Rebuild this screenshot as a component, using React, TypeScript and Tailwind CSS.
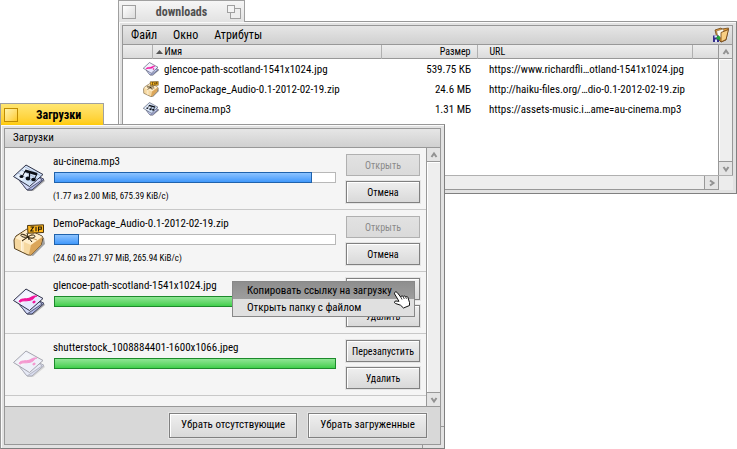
import React from 'react';

type FileKind = 'audio' | 'zip' | 'image';

interface Download {
  name: string;
  kind: FileKind;
  percent: number;
  info?: string;
  done?: boolean;
  missing?: boolean;
  primary: string;
  primaryDisabled?: boolean;
  secondary: string;
}

const files: { name: string; kind: FileKind; size: string; url: string }[] = [
  { name: 'glencoe-path-scotland-1541x1024.jpg', kind: 'image', size: '539.75 КБ', url: 'https://www.richardfli…otland-1541x1024.jpg' },
  { name: 'DemoPackage_Audio-0.1-2012-02-19.zip', kind: 'zip', size: '24.6 МБ', url: 'http://haiku-files.org/…dio-0.1-2012-02-19.zip' },
  { name: 'au-cinema.mp3', kind: 'audio', size: '1.31 МБ', url: 'https://assets-music.i…ame=au-cinema.mp3' },
];

const downloads: Download[] = [
  { name: 'au-cinema.mp3', kind: 'audio', percent: 92, info: '(1.77 из 2.00 MiB, 675.39 KiB/с)', primary: 'Открыть', primaryDisabled: true, secondary: 'Отмена' },
  { name: 'DemoPackage_Audio-0.1-2012-02-19.zip', kind: 'zip', percent: 9, info: '(24.60 из 271.97 MiB, 265.94 KiB/с)', primary: 'Открыть', primaryDisabled: true, secondary: 'Отмена' },
  { name: 'glencoe-path-scotland-1541x1024.jpg', kind: 'image', percent: 100, done: true, primary: 'Открыть', secondary: 'Удалить' },
  { name: 'shutterstock_1008884401-1600x1066.jpeg', kind: 'image', percent: 100, done: true, missing: true, primary: 'Перезапустить', secondary: 'Удалить' },
];

const FileIcon = ({ kind, className }: { kind: FileKind; className: string }) => {
  if (kind === 'zip') {
    return (
      <svg viewBox="0 0 32 32" className={className} aria-hidden="true">
        <path d="M16 31 L20 32 L32 20 L31 14 L28 14 Z" fill="#000" opacity=".35" />
        <path d="M1 16 L3 12 L14 5 L29 12 L30 14 L28 21 L18 31 L15 31 L1.500 24.500 Z" fill="#f6d8a0" stroke="#55401f" />
        <path d="M2 14 L14 5.500 L29 12.500 L18 21 Z" fill="#ffeecb" />
        <path d="M18 21 L29.500 13 L28 21 L18 31 L16 30 Z" fill="#dba65a" />
        <path d="M8.500 17 V27 M10 18 V28" stroke="#fff3d8" strokeWidth="1.200" />
        <path d="M9 16.500 L21 9 M8 10 L24 16" fill="none" stroke="#c59c5d" strokeWidth="1" />
        <path d="M15 13 C9 8 6 11 9 12.500 S13 13 15 13 C20 9 24 12 21 13.500 S17 14 15 13 M15 13 L9 17 M15 13 L19 18 M14 9 L16 16" fill="none" stroke="#2d2413" />
        <path d="M14.500 1.500 L30.500 .8 L30.500 8.500 L15 9.200 Z" fill="#ffb81f" stroke="#4a3512" />
        <path d="M17.500 3 H20.500 L17.700 7 H20.700 M23 2.800 V7.200 M25.500 7.500 V3 H28.300 V5.300 H26" fill="none" stroke="#201808" strokeWidth="1.100" />
      </svg>
    );
  }
  return (
    <svg viewBox="0 0 32 32" className={className} aria-hidden="true">
      <path d="M14 29 L20 29 L32 19 L30 16 Z" fill="#000" opacity=".3" />
      <path d="M7 19 L17 9 L31 17.500 L19 28 L14 28 Z" fill="#aeb7e6" stroke="#3b3e58" />
      <path d="M6 18 L17 8 L29 18 L14 28 Z" fill="#d2d9f8" stroke="#3b3e58" strokeWidth=".8" />
      <path d="M.5 14.500 L13 3 L30 12.500 L16.500 24.500 Z" fill={kind === 'audio' ? '#d3e3f8' : '#e6e9ff'} stroke="#2f3146" />
      <path d="M3 14.500 L13 5 L20 8.500 L9 18.500 Z" fill="#fff" opacity=".55" />
      {kind === 'audio' ? (
        <>
          <path d="M5 11 L21 20.500 M8.500 8 L24.500 17 M12 5 L28 14" stroke="#90a5c9" strokeWidth=".7" />
          <path d="M9.500 14 L12.500 8.500 M24 12 L21.500 17" fill="none" stroke="#0b0e16" />
          <path d="M12.500 7.500 L24.500 11 L23.500 13.500 L11.500 10 Z" fill="#0b0e16" />
          <ellipse cx="15" cy="16.500" rx="2.300" ry="2" fill="#0b0e16" />
          <ellipse cx="8.500" cy="14.500" rx="2" ry="1.500" fill="#0b0e16" />
          <ellipse cx="20.500" cy="17.500" rx="2.300" ry="1.800" fill="#0b0e16" />
          <path d="M16.500 15.500 V11" stroke="#0b0e16" strokeWidth="1.200" />
        </>
      ) : (
        <path d="M6 15.500 C7 12.500 11 13 15 12.500 C18 12 19 9.500 24 10 C21 10.500 22 13 17 14.300 C12 15.500 9 14 7.500 16 Z M20 15.500 L22 15 L22 16.500 L20 17 Z" fill="#f3129a" stroke="#f3129a" strokeWidth="1" />
      )}
    </svg>
  );
};

const FolderIcon = () => (
  <svg viewBox="0 0 18 16" className="h-4 w-[18px]" aria-hidden="true">
    <path d="M3 3 L9 1 L10 2 L16.500 1 L14 13 L9 15 L5 11 Z" fill="#e39b38" stroke="#6b4518" strokeWidth=".8" />
    <path d="M4.500 4 L11 2 L12 4 L9 11 L6 10 Z" fill="#fffdf2" stroke="#7b6240" strokeWidth=".6" />
    <path d="M9 5.500 L16.500 2.500 L14 12.500 L9 15 Z" fill="#f9cf83" stroke="#6a3c10" strokeWidth=".8" />
    <path d="M1 8.500 H7 V15 H1 Z" fill="#34308c" />
    <path d="M2.500 8.500 H5 V10.500 H2.500 Z M3 12.500 H5 V15 H3 Z" fill="#dfe3ff" />
    <path d="M4 11 L6 8.500 L8 9.500 V13 L5.500 12.500 Z" fill="#24a63a" />
  </svg>
);

const HandCursor = () => (
  <svg viewBox="0 0 18 18" className="h-[18px] w-[18px]" aria-hidden="true">
    <path
      d="M1.500 2.800 C1 1 3 .3 4.200 1.500 L7.700 6 C8 4.800 9.600 4.600 10.200 5.700 C10.600 4.700 12.200 4.700 12.700 5.900 C13.500 5.200 14.700 5.500 15 6.600 L16.500 11.500 L16.500 14.500 L10.500 17 L7.500 14.200 L2.500 12.500 C.8 11.800 1.300 9.900 3 10 L6 10.300 Z"
      fill="#fff"
      stroke="#111"
    />
    <path d="M7.700 6 L9 8.500 M10.200 5.700 L11.300 8 M12.700 5.900 L13.500 7.800" stroke="#111" strokeWidth=".8" />
  </svg>
);

const arrows = {
  up: 'M1.500 6 L4 2.500 L6.500 6',
  down: 'M1.500 2 L4 5.500 L6.500 2',
  right: 'M2 1.500 L5.500 4 L2 6.500',
};

const ScrollArrow = ({ dir, label, className }: { dir: keyof typeof arrows; label: string; className: string }) => (
  <button aria-label={label} className={`flex h-[13px] w-[13px] shrink-0 items-center justify-center bg-[#e4e4e4] ${className}`}>
    <svg viewBox="0 0 8 8" className="h-2 w-2">
      <path d={arrows[dir]} fill="none" stroke="#929292" strokeWidth="2" />
    </svg>
  </button>
);

const VerticalScroll = () => (
  <div className="flex w-[14px] shrink-0 flex-col border-l border-[#989898] bg-[#eeeeee]">
    <ScrollArrow dir="up" label="Вверх" className="box-content border-b border-[#989898]" />
    <div className="flex-1 border-l border-t border-white" />
    <ScrollArrow dir="down" label="Вниз" className="box-content border-t border-[#989898]" />
  </div>
);

const Button = ({ children, disabled, large }: { children: React.ReactNode; disabled?: boolean; large?: boolean }) => (
  <button
    disabled={disabled}
    className={`whitespace-nowrap border bg-linear-to-b ${
      disabled
        ? 'border-[#b0b0b0] from-[#e2e2e2] to-[#dadada] text-[#8a8a8a]'
        : 'border-[#808080] from-[#efefef] to-[#d9d9d9] shadow-[inset_1px_1px_0_#fff,0_0_0_1px_#e4e4e4]'
    } ${large ? 'h-[25px] px-[11px] text-[11px]' : 'h-[22px] w-full text-[10px]'}`}
  >
    {children}
  </button>
);

const DownloadRow = ({ item }: { item: Download }) => (
  <li className="flex h-[62px] border-b border-[#c8c8c8] pl-2 pr-[6px]">
    <FileIcon kind={item.kind} className={`mt-[14px] h-8 w-8 shrink-0 ${item.missing ? 'opacity-40' : ''}`} />
    <div className="ml-2 mr-[9px] min-w-0 flex-1 pt-[6px]">
      <p className="truncate text-[11px] leading-4">{item.name}</p>
      <div className="ml-px mt-[2px] h-[11px] border border-[#b8b8b8] bg-white" role="progressbar" aria-valuenow={item.percent} aria-label={item.name}>
        <div
          className={`-ml-px -mt-px h-[11px] border bg-linear-to-b ${
            item.done ? '-mr-px border-[#1c8a2b] from-[#8fe595] to-[#3fcf4b]' : 'border-[#1f62ac] from-[#8cc3ff] to-[#3f98fb]'
          }`}
          style={item.done ? undefined : { width: `${item.percent}%` }}
        />
      </div>
      {item.info && <p className="mt-[6px] whitespace-nowrap text-[9px] leading-[14px]">{item.info}</p>}
    </div>
    <div className="flex w-[75px] shrink-0 flex-col gap-[5px] pl-px pt-[6px]">
      <Button disabled={item.primaryDisabled}>{item.primary}</Button>
      <Button>{item.secondary}</Button>
    </div>
  </li>
);

const Frame = ({ children }: { children: React.ReactNode }) => (
  <div className="border border-[#989898] border-b-[#808080] border-r-[#808080] bg-[#e2e2e2] p-[3px] shadow-[inset_1px_1px_0_#fafafa]">
    <div className="border border-[#989898]">{children}</div>
  </div>
);

const TrackerWindow = () => (
  <section className="absolute left-[118px] right-0 top-0">
    <div className="relative z-10 -mb-px flex h-[22px] w-[127px] items-center justify-between border border-b-0 border-[#a0a0a0] bg-linear-to-b from-[#f6f6f6] to-[#e2e2e2] px-[3px]">
      <button aria-label="Закрыть" className="h-[14px] w-[14px] border border-[#a0a0a0] bg-linear-to-br from-white to-[#dcdcdc]" />
      <h1 className="text-[12px] font-bold text-[#505050]">downloads</h1>
      <button aria-label="Развернуть" className="relative h-[14px] w-[14px]">
        <span className="absolute bottom-0 right-0 h-[11px] w-[11px] border border-[#a0a0a0] bg-[#eeeeee]" />
        <span className="absolute left-0 top-0 h-2 w-2 border border-[#a0a0a0] bg-[#f4f4f4]" />
      </button>
    </div>
    <Frame>
      <nav className="flex h-[19px] items-center gap-4 border-b border-[#989898] bg-linear-to-b from-[#e6e6e6] to-[#d0d0d0] pl-2 pr-[2px] text-[12px]">
        <button>Файл</button>
        <button>Окно</button>
        <button>Атрибуты</button>
        <span className="ml-auto"><FolderIcon /></span>
      </nav>
      <div className="flex bg-white">
        <div className="h-[130px] min-w-0 flex-1">
          <table className="w-full table-fixed border-collapse text-[11px]">
            <colgroup>
              <col className="w-[29px]" />
              <col />
              <col className="w-24" />
              <col className="w-[215px]" />
              <col className="w-[26px]" />
            </colgroup>
            <thead>
              <tr className="h-[14px] bg-linear-to-b from-[#eeeeee] to-[#dadada] text-[10px] leading-[12px] shadow-[inset_0_-1px_0_#989898]">
                <td className="border-r border-[#b0b0b0] p-0" />
                <th className="border-r border-[#b0b0b0] p-0 text-left font-normal">
                  <span className="flex items-center gap-[2px] pl-[3px]">
                    <svg viewBox="0 0 7 4" className="h-1 w-[7px]"><path d="M3.500 0 L7 4 H0 Z" fill="#555" /></svg>
                    Имя
                  </span>
                </th>
                <th className="border-r border-[#b0b0b0] p-0 pr-[6px] text-right font-normal">Размер</th>
                <th className="border-r border-[#b0b0b0] p-0 pl-3 text-left font-normal">URL</th>
                <td className="p-0" />
              </tr>
            </thead>
            <tbody>
              {files.map((file) => (
                <tr key={file.name} className="h-5 leading-4">
                  <td className="p-0 pl-5"><FileIcon kind={file.kind} className="h-4 w-4 max-w-none" /></td>
                  <td className="truncate p-0 pl-3 pt-px">{file.name}</td>
                  <td className="whitespace-nowrap p-0 pr-[6px] pt-px text-right">{file.size}</td>
                  <td className="whitespace-nowrap p-0 pl-3 pt-px">{file.url}</td>
                  <td />
                </tr>
              ))}
            </tbody>
          </table>
        </div>
        <VerticalScroll />
      </div>
      <div className="flex h-[14px]">
        <div className="flex flex-1 justify-end border-t border-[#b0b0b0] bg-[#eeeeee]">
          <ScrollArrow dir="right" label="Вправо" className="box-content border-x border-[#989898]" />
        </div>
        <div className="-mb-px -mr-px w-[14px] border-t border-[#b0b0b0] bg-[#ececec]" />
      </div>
    </Frame>
  </section>
);

const ContextMenu = () => (
  <div className="absolute left-[232px] top-[178px] z-20 w-[183px]">
    <div role="menu" className="border border-[#888888] bg-[#e0e0e0] text-[11px] leading-4">
      <button role="menuitem" className="block w-full whitespace-nowrap bg-linear-to-b from-[#8e8e8e] to-[#9e9e9e] pl-[14px] pt-px text-left">Копировать ссылку на загрузку</button>
      <button role="menuitem" className="block w-full whitespace-nowrap pl-[14px] pt-px text-left">Открыть папку с файлом</button>
    </div>
    <div className="absolute right-1 top-[10px]"><HandCursor /></div>
  </div>
);

const DownloadsWindow = () => (
  <section className="absolute left-0 top-[103px] z-10 w-[445px]">
    <div className="relative z-10 -mb-px flex h-[22px] w-[104px] items-center border border-b-0 border-[#a0a0a0] bg-linear-to-b from-[#ffe670] to-[#ffcb00] px-[3px]">
      <button aria-label="Закрыть" className="h-[14px] w-[14px] border border-[#c08c00] bg-linear-to-br from-[#fff3a8] to-[#ffcb10]" />
      <h1 className="ml-[18px] text-[12px] font-bold">Загрузки</h1>
    </div>
    <Frame>
      <div className="flex h-[19px] items-center border-b border-[#989898] bg-linear-to-b from-[#e6e6e6] to-[#d0d0d0] pl-2 text-[11px]">Загрузки</div>
      <div className="flex">
        <ul className="h-[258px] min-w-0 flex-1 overflow-hidden bg-[#f5f5f5]">
          {downloads.map((item) => (
            <DownloadRow key={item.name} item={item} />
          ))}
        </ul>
        <VerticalScroll />
      </div>
      <div className="flex h-[38px] items-center justify-end gap-[11px] border-t border-[#989898] bg-[#d8d8d8] pr-[13px]">
        <Button large>Убрать отсутствующие</Button>
        <Button large>Убрать загруженные</Button>
      </div>
    </Frame>
    {/* resize corner marks */}
    <span className="absolute bottom-px right-[22px] h-[3px] w-px bg-[#989898]" />
    <span className="absolute bottom-[22px] right-px h-px w-[3px] bg-[#989898]" />
    <ContextMenu />
  </section>
);

const App: React.FC = () => {
  return (
    <main className="relative min-h-screen overflow-hidden bg-white font-['Roboto_Condensed',Roboto,'Noto_Sans',sans-serif] text-black">
      <TrackerWindow />
      <DownloadsWindow />
    </main>
  );
};

export default App;
